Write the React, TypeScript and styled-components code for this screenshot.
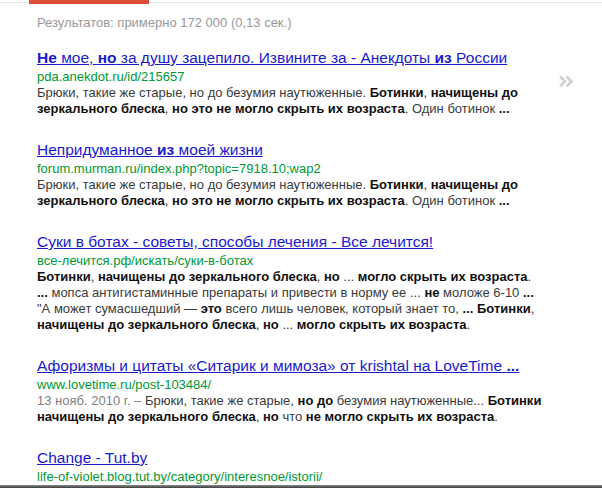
import React from 'react';
import styled, { createGlobalStyle } from 'styled-components';

const GlobalStyle = createGlobalStyle`
  html, body {
    margin: 0;
    padding: 0;
    background: #fff;
    overflow: hidden;
  }
  body {
    font-family: "Liberation Sans", Arial, sans-serif;
  }
`;

const Page = styled.div`
  width: 602px;
  height: 488px;
  overflow: hidden;
`;

const TopRule = styled.div`
  height: 4px;
  background: linear-gradient(to bottom, transparent 2px, #e5e5e5 2px, #e5e5e5 3px, transparent 3px);
`;

const ActiveTab = styled.div`
  margin-left: 29px;
  width: 120px;
  height: 4px;
  background: #dd4b39;
`;

const Stats = styled.div`
  padding: 11px 0 0 37px;
  font-size: 13px;
  line-height: 16px;
  color: #999;
  white-space: nowrap;
`;

const Body = styled.div`
  display: flex;
  padding: 17px 0 0 37px;
`;

const Results = styled.div`
  flex: 0 0 500px;
  display: flex;
  flex-direction: column;
  gap: 23px;
`;

const Aside = styled.div`
  flex: 1;
  display: flex;
  justify-content: flex-start;
  padding: 26px 0 0 17px;
`;

const Item = styled.div`
  display: flex;
  flex-direction: column;
`;

const Title = styled.a`
  font-size: 15.5px;
  line-height: 20px;
  color: #1a1acc;
  text-decoration: underline;
  white-space: nowrap;
  cursor: pointer;
`;

const Url = styled.div`
  font-size: 13px;
  line-height: 16px;
  color: #009933;
  white-space: nowrap;
  margin-top: 1px;
`;

const Snippet = styled.div`
  font-size: 13px;
  line-height: 16px;
  color: #3a3a3a;
  white-space: nowrap;
  b {
    color: #111;
  }
`;

const Date = styled.span`
  color: #808080;
`;

const BottomEdge = styled.div`
  position: fixed;
  left: 0;
  right: 0;
  bottom: 0;
  height: 3px;
  background: linear-gradient(to bottom, #8a8a8a, #3c3c3c);
`;

const Chevrons = () => (
  <svg width="16" height="13" viewBox="0 0 16 13">
    <path d="M2 1.5 L7 6.5 L2 11.5 M8.5 1.5 L13.5 6.5 L8.5 11.5" fill="none" stroke="#d0d0d0" strokeWidth="2.6" />
  </svg>
);

interface resultProps {
  title: React.ReactNode
  url: string
  lines: React.ReactNode[]
}

const Result = ({ title, url, lines }: resultProps) => (
  <Item>
    <Title>{title}</Title>
    <Url>{url}</Url>
    {lines.map((l, i) => <Snippet key={i}>{l}</Snippet>)}
  </Item>
);

const App = () => {
  return (
    <Page>
      <GlobalStyle />
      <TopRule>
        <ActiveTab />
      </TopRule>
      <Stats>Результатов: примерно 172 000 (0,13 сек.)</Stats>
      <Body>
        <Results>
          <Result
            title={<><b>Не</b> мое, <b>но</b> за душу зацепило. Извините за - Анекдоты <b>из</b> России</>}
            url="pda.anekdot.ru/id/215657"
            lines={[
              <>Брюки, такие же старые, но до безумия наутюженные. <b>Ботинки</b>, <b>начищены до</b></>,
              <><b>зеркального блеска</b>, <b>но это не могло скрыть их возраста</b>. Один ботинок <b>...</b></>,
            ]}
          />
          <Result
            title={<>Непридуманное <b>из</b> моей жизни</>}
            url="forum.murman.ru/index.php?topic=7918.10;wap2"
            lines={[
              <>Брюки, такие же старые, но до безумия наутюженные. <b>Ботинки</b>, <b>начищены до</b></>,
              <><b>зеркального блеска</b>, <b>но это не могло скрыть их возраста</b>. Один ботинок <b>...</b></>,
            ]}
          />
          <Result
            title="Суки в ботах - советы, способы лечения - Все лечится!"
            url="все-лечится.рф/искать/суки-в-ботах"
            lines={[
              <><b>Ботинки</b>, <b>начищены до зеркального блеска</b>, <b>но</b> ... <b>могло скрыть их возраста</b>.</>,
              <><b>...</b> мопса антигистаминные препараты и привести в норму ее ... <b>не</b> моложе 6-10 <b>...</b></>,
              <>"А может сумасшедший — <b>это</b> всего лишь человек, который знает то, <b>... Ботинки</b>,</>,
              <><b>начищены до зеркального блеска</b>, <b>но</b> ... <b>могло скрыть их возраста</b>.</>,
            ]}
          />
          <Result
            title={<>Афоризмы и цитаты «Ситарик и мимоза» от krishtal на LoveTime <b>...</b></>}
            url="www.lovetime.ru/post-103484/"
            lines={[
              <><Date>13 нояб. 2010 г. – </Date>Брюки, такие же старые, <b>но до</b> безумия наутюженные... <b>Ботинки</b></>,
              <><b>начищены до зеркального блеска</b>, <b>но</b> что <b>не могло скрыть их возраста</b>.</>,
            ]}
          />
          <Result
            title="Change - Tut.by"
            url="life-of-violet.blog.tut.by/category/interesnoe/istorii/"
            lines={[
              <>Бывает так, что <b>не</b> можешь найти слов. <b>Ботинки</b>, <b>начищены до</b></>,
            ]}
          />
        </Results>
        <Aside>
          <div><Chevrons /></div>
        </Aside>
      </Body>
      <BottomEdge />
    </Page>
  );
};

export default App;
